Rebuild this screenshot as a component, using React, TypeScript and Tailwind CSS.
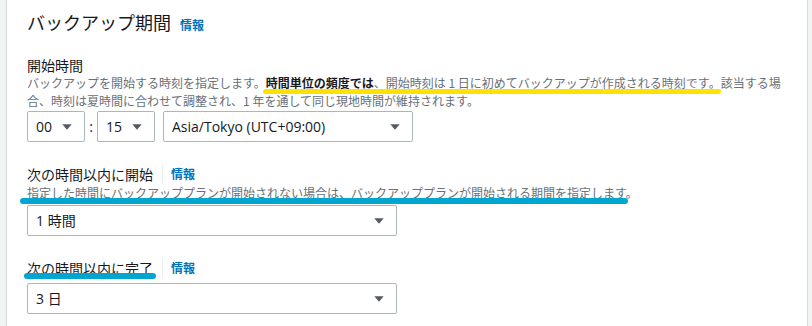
import React from "react";

const Caret = () => (
  <svg width="10" height="6" viewBox="0 0 10 6" className="shrink-0">
    <path d="M0.3 0.3 H9.7 L5 5.8 Z" fill="#545b64" />
  </svg>
);

function Select({ value, w }: { value: string; w: string }) {
  return (
    <div
      className={`${w} h-[31px] flex items-center justify-between pl-[8px] pr-[12px] border border-[#aab7b8] rounded-[2px] bg-white text-[14px] text-[#16191f] font-['Open_Sans','Noto_Sans_CJK_JP',sans-serif]`}
    >
      <span>{value}</span>
      <Caret />
    </div>
  );
}

export default function App() {
  return (
    <div className="flex h-[326px] w-[812px] bg-[#f2f3f3] pl-[6px] font-['Noto_Sans_CJK_JP',sans-serif]">
      <div className="w-[802px] border-x border-[#d5dbdb] bg-white pl-[20px] pr-[20px] pt-[10px]">
        <div className="flex items-baseline gap-[9px]">
          <h2 className="text-[18px] leading-[24px] font-normal text-[#16191f]">バックアップ期間</h2>
          <span className="text-[12px] font-bold text-[#0073bb]">情報</span>
        </div>

        <div className="mt-[22px] text-[14px] leading-[18px] text-[#16191f]">開始時間</div>
        <p className="text-[12px] leading-[18px] text-[#687078]">
          バックアップを開始する時刻を指定します。
          <span className="relative">
            <b className="font-bold text-[#16191f]">時間単位の頻度では</b>、開始時刻は 1 日に初めてバックアップが作成される時刻です。
            <span className="absolute left-[-3px] right-0 bottom-[-3px] h-[5px] rounded-full bg-[#ffe200]" />
          </span>
          該当する場合、時刻は夏時間に合わせて調整され、1 年を通して同じ現地時間が維持されます。
        </p>

        <div className="mt-[1px] flex items-center">
          <Select value="00" w="w-[58px]" />
          <span className="w-[12px] text-center text-[14px] text-[#16191f] font-['Open_Sans',sans-serif]">:</span>
          <Select value="15" w="w-[58px]" />
          <div className="ml-[8px]">
            <Select value="Asia/Tokyo (UTC+09:00)" w="w-[250px]" />
          </div>
        </div>

        <div className="mt-[22px] flex items-center h-[20px]">
          <span className="text-[14px] leading-[20px] text-[#16191f]">次の時間以内に開始</span>
          <span className="ml-[9px] h-[20px] border-l border-[#eaeded]" />
          <span className="ml-[8px] text-[12px] font-bold text-[#0073bb]">情報</span>
        </div>
        <p className="relative text-[12px] leading-[18px] text-[#687078]">
          指定した時間にバックアッププランが開始されない場合は、バックアッププランが開始される期間を指定します。
          <span className="absolute left-[-7px] top-[14px] w-[608px] h-[6px] rounded-full bg-[#00a6cf]" />
        </p>
        <div className="mt-[3px]">
          <Select value="1 時間" w="w-[370px]" />
        </div>

        <div className="mt-[22px] flex items-center h-[20px]">
          <span className="relative text-[14px] leading-[20px] text-[#16191f]">
            次の時間以内に完了
            <span className="absolute left-[-3px] top-[15px] w-[132px] h-[6px] rounded-full bg-[#00a6cf]" />
          </span>
          <span className="ml-[9px] h-[20px] border-l border-[#eaeded]" />
          <span className="ml-[8px] text-[12px] font-bold text-[#0073bb]">情報</span>
        </div>
        <div className="mt-[5px]">
          <Select value="3 日" w="w-[370px]" />
        </div>
      </div>
    </div>
  );
}
